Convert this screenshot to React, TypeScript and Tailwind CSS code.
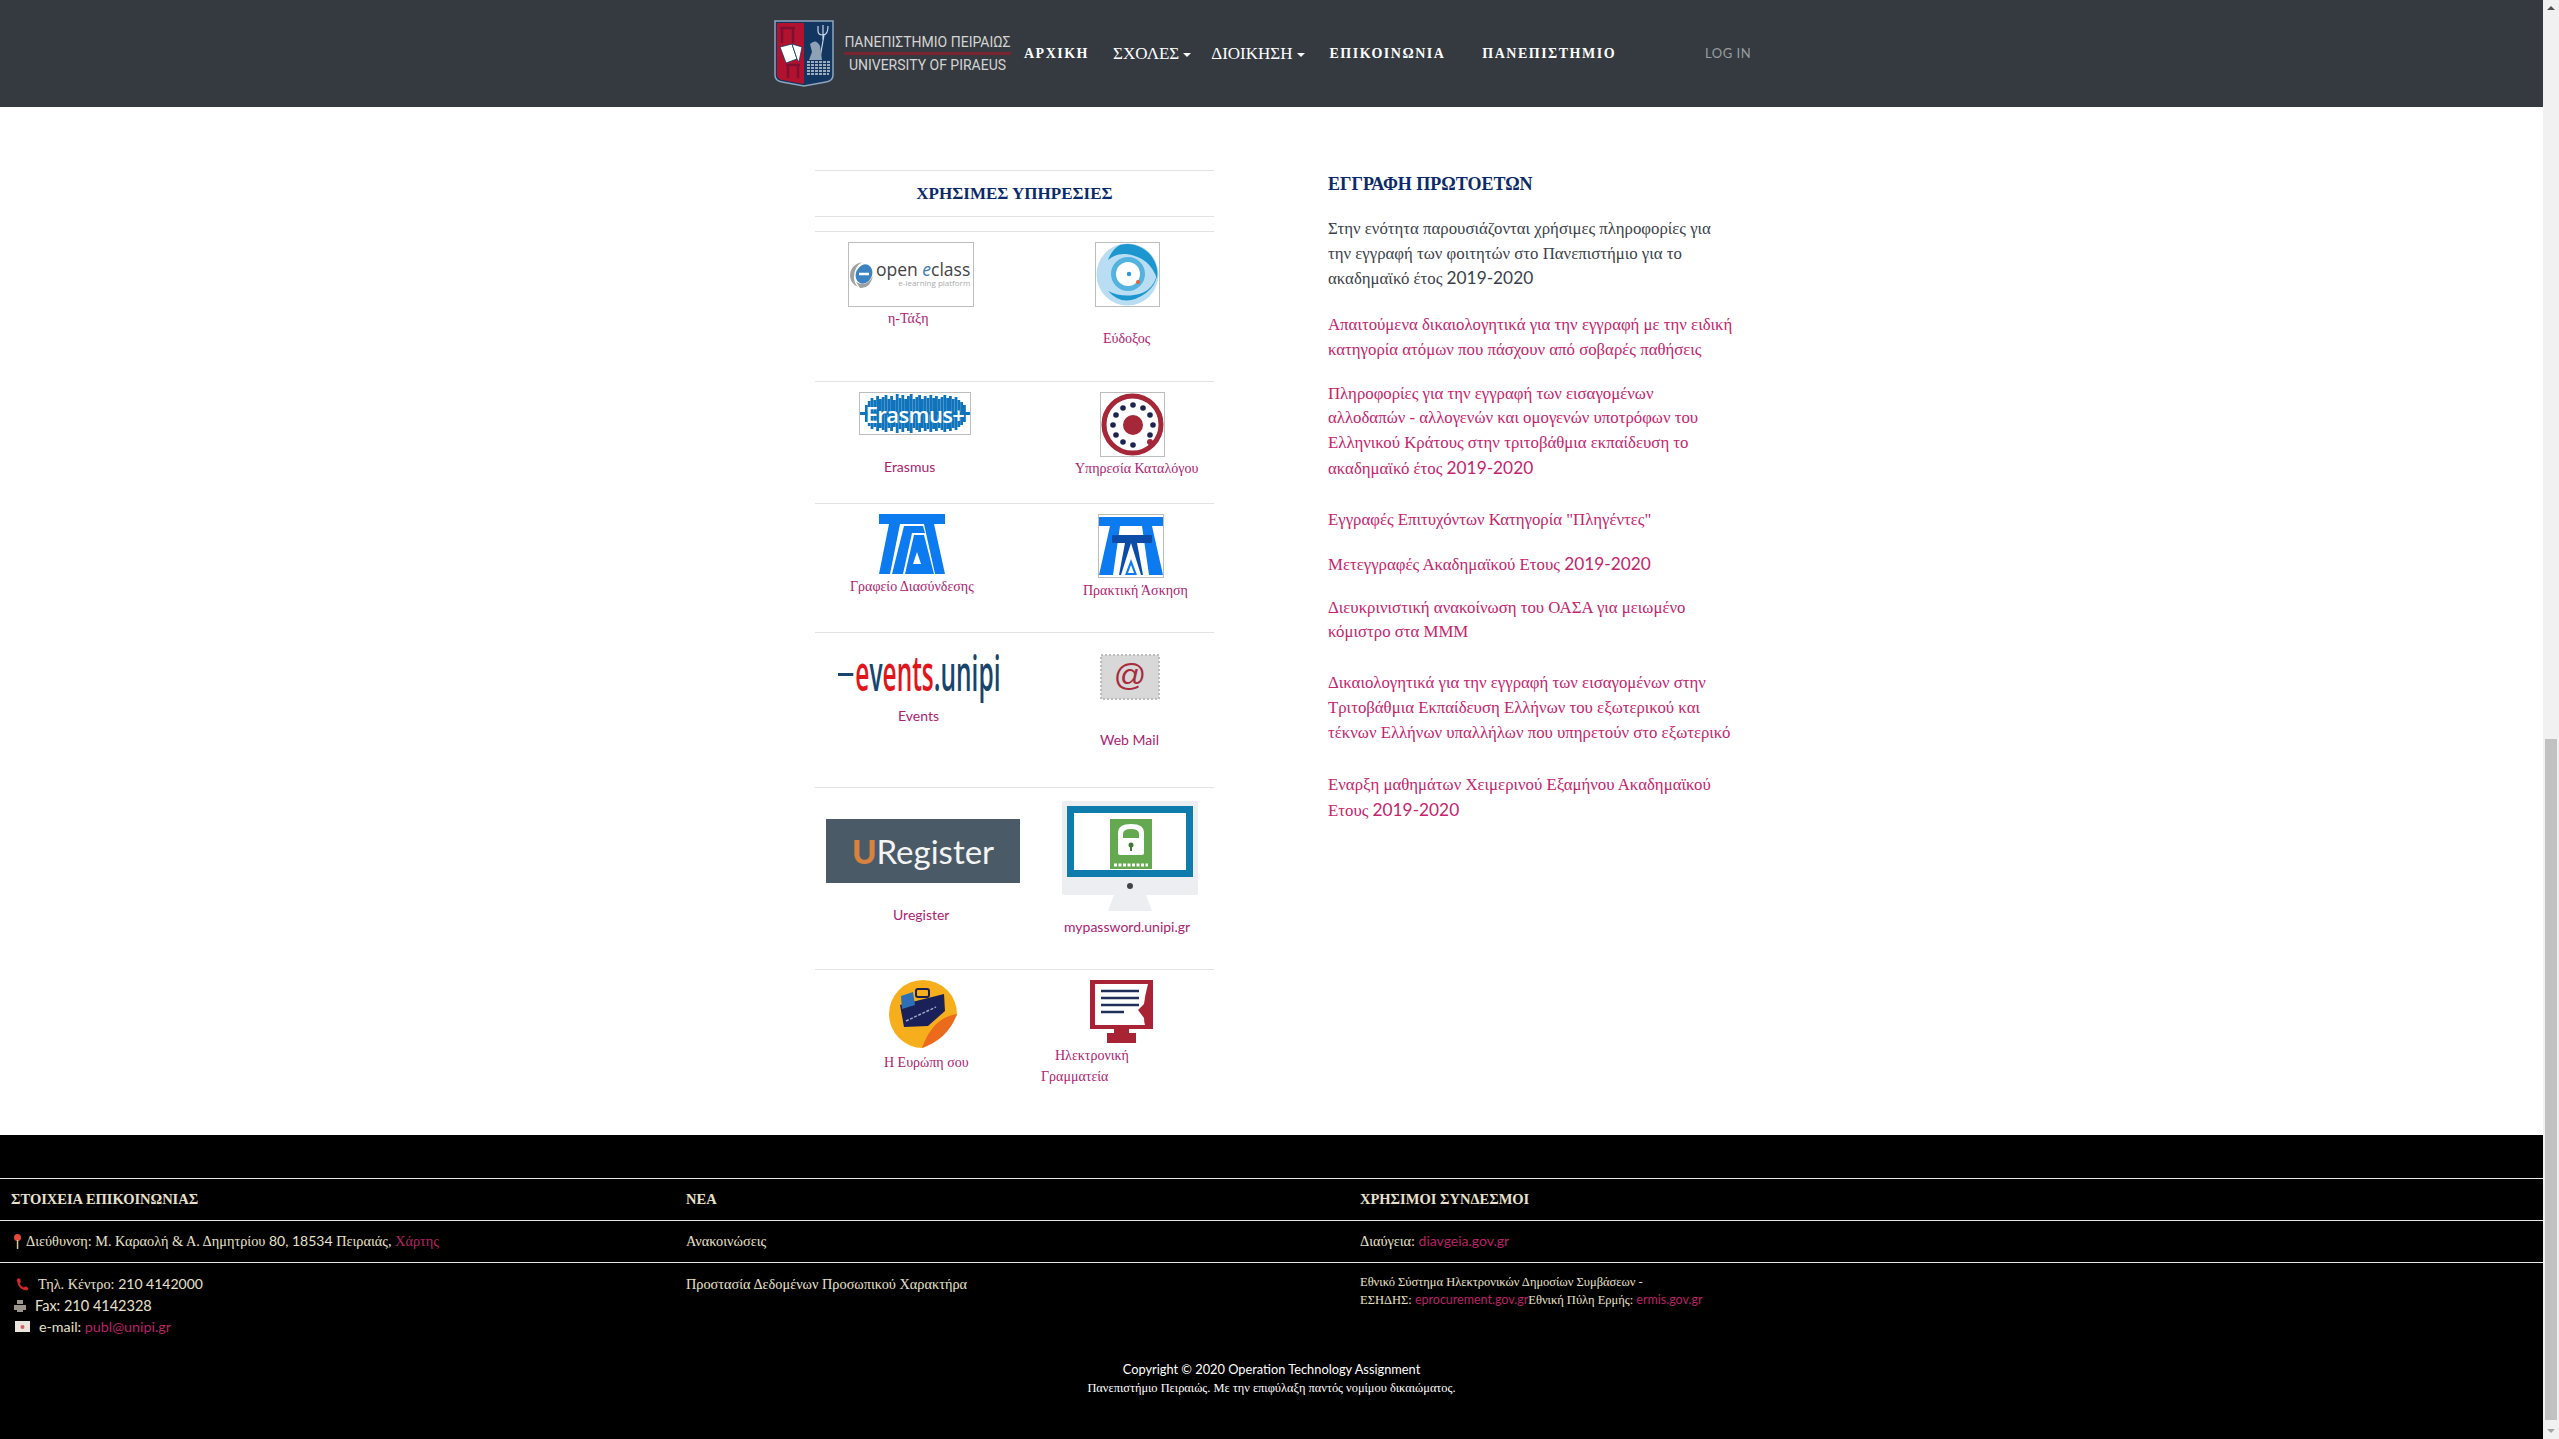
import React from 'react'

const link = 'text-[#b92265]'

// Latin and digits come out in Lato on the real page, greek falls back to a serif
const L = ({ children, className = '' }: { children: React.ReactNode; className?: string }) => (
  <span className={`font-['Lato',sans-serif] ${className}`}>{children}</span>
)

const Shield = () => (
  <svg width="60" height="67" viewBox="0 0 60 67">
    <path d="M1 1H59V55Q59 61 52 62L30 66L8 62Q1 61 1 55Z" fill="#12365f" stroke="#8fa6bd" strokeWidth="1.500" />
    <path d="M3 3H30V64L8 60Q3 59 3 54Z" fill="#b3122f" />
    <path d="M8 7V23M19 7V23M6 8H21M14 44V58M24 44V58M12 45H26" stroke="#7d1030" strokeWidth="2.500" fill="none" />
    <path d="M6 27L18 24L23 39L12 43Z" fill="#fff" stroke="#12365f" strokeWidth="0.800" />
    <path d="M18 24L28 27L25 42L23 39Z" fill="#fff" stroke="#12365f" strokeWidth="0.800" />
    <path d="M49 5V20M44 6V11Q44 15 49 15Q54 15 54 6M50 15L46 38" stroke="#c9d4df" strokeWidth="1.200" fill="none" />
    <path d="M36 24Q42 18 46 26L48 40H35L38 32Z" fill="#8ea2b5" />
    <path d="M33 42H57M33 45H57M33 48H57M33 51H57M33 54H55" stroke="#c9d4df" strokeWidth="1.500" strokeDasharray="3 1" />
  </svg>
)

const EclassLogo = () => (
  <div className="flex h-[65px] w-[126px] items-center border border-[#bdbdbd] bg-white">
    <svg width="26" height="28" viewBox="0 0 26 28" className="shrink-0">
      <path d="M1 15Q1 4 13 1Q5 6 5 16Q5 22 9 26Q1 22 1 15Z" fill="#a0a0a0" />
      <ellipse cx="15" cy="13" rx="8" ry="10" fill="#3c83c2" transform="rotate(25 15 13)" />
      <path d="M10 13H20" stroke="#fff" strokeWidth="2.500" />
      <path d="M7 21Q17 27 24 15Q21 28 11 27Z" fill="#a0a0a0" />
    </svg>
    <div className="ml-px shrink-0 whitespace-nowrap font-['Open_Sans',sans-serif]">
      <div className="text-[17.500px] leading-[17px] text-[#444]">open <span className="italic text-[#3c78b8]">e</span>class</div>
      <div className="text-right text-[8px] leading-[10px] text-[#aaa]">e-learning platform</div>
    </div>
  </div>
)

const EudoxusLogo = () => (
  <div className="h-[65px] w-[65px] border border-[#bdbdbd] bg-white">
    <svg width="63" height="63" viewBox="0 0 63 63">
      <circle cx="31.500" cy="31.500" r="31" fill="#b9def3" />
      <path d="M24 2A30 30 0 0 1 61 36Q54 14 30 11Q20 10 12 17Q16 6 24 2Z" fill="#1c96cf" />
      <path d="M12 48Q28 66 50 50Q60 42 61 32Q56 50 38 52Q24 54 12 48Z" fill="#1c96cf" />
      <circle cx="32" cy="31" r="17" fill="#53b3de" />
      <circle cx="32" cy="31" r="12" fill="#fff" />
      <circle cx="33" cy="31" r="2.200" fill="#2a96d2" />
      <circle cx="42" cy="39" r="2" fill="#e2603d" />
    </svg>
  </div>
)

const skyline = [12, 8, 5, 7, 3, 6, 4, 2, 6, 3, 7, 1, 5, 2, 6, 3, 1, 6, 4, 2, 6, 3, 5, 2, 5, 3, 6, 4, 2, 5, 3, 6, 4, 7, 9, 12]

const ErasmusLogo = () => (
  <div className="relative flex h-[43px] w-[112px] items-center justify-center overflow-hidden border border-[#bdbdbd] bg-white">
    <svg width="110" height="41" viewBox="0 0 110 41" className="absolute left-0 top-0">
      <rect x="0" y="19" width="110" height="3" fill="#0f74bb" />
      {skyline.map((h, i) => (
        <rect key={i} x={5 + i * 2.800} y={h} width="2.800" height={41 - 2 * h} fill="#0f74bb" />
      ))}
    </svg>
    <span className="relative font-['Open_Sans',sans-serif] text-[22px] font-semibold leading-none tracking-[-0.6px] text-white">Erasmus+</span>
  </div>
)

const CatalogLogo = () => (
  <div className="h-[65px] w-[65px] border border-[#bdbdbd] bg-white">
    <svg width="63" height="63" viewBox="0 0 63 63">
      <circle cx="31.500" cy="31.500" r="28.500" fill="none" stroke="#a52738" strokeWidth="5" />
      <circle cx="32" cy="32" r="10" fill="#a52738" />
      {[
        [32, 12], [42, 15], [49, 22], [52, 32], [49, 42], [32, 52], [22, 49], [15, 42], [12, 32], [15, 22], [22, 15],
      ].map(([x, y]) => (
        <circle key={`${x}-${y}`} cx={x} cy={y} r="2.800" fill="#1d2450" />
      ))}
      <circle cx="49" cy="49" r="3" fill="#a52738" />
    </svg>
  </div>
)

const TgdLogo = () => (
  <svg width="66" height="60" viewBox="0 0 66 60" className="block">
    <rect width="66" height="60" fill="#fff" />
    <rect width="66" height="10" fill="#0d7bf0" />
    <path d="M10 10H21L11 60H0Z" fill="#0d7bf0" />
    <path d="M25 12H44L46 19H33L24 60H13Z" fill="#0d7bf0" />
    <path d="M35 21H45L55 60H26Z" fill="#0d7bf0" />
    <path d="M38 38L42 50H34Z" fill="#fff" />
    <path d="M45 10H55L66 60H56Z" fill="#0d7bf0" />
  </svg>
)

const PraktikiLogo = () => (
  <div className="w-fit border border-[#bdbdbd] bg-white">
    <svg width="64" height="62" viewBox="0 0 64 62" className="block">
      <rect y="2" width="64" height="9" fill="#0d7bf0" />
      <path d="M11 11H21L14 60H0ZM43 11H53L64 60H50Z" fill="#0d7bf0" />
      <rect x="13" y="20" width="40" height="8" rx="1" fill="#0a4ca8" />
      <path d="M20 60L26 28H32L22 60ZM44 60L38 28H32L42 60Z" fill="#0a4ca8" />
      <path d="M32 44L38 60H26Z" fill="#0d7bf0" />
      <path d="M32 50L35 58H29Z" fill="#fff" />
    </svg>
  </div>
)

const EventsLogo = () => (
  <div className="h-[45px] w-[160px] overflow-visible">
    <div className="flex w-[300px] origin-left scale-x-[0.51] items-center whitespace-nowrap font-['Open_Sans',sans-serif] text-[48px] font-semibold leading-[45px] text-[#17456c]">
      <span className="mr-1 mt-1 inline-block h-[3px] w-[30px] shrink-0 bg-[#17456c]" />
      <span className="text-[#e2141c]">e</span>v<span className="text-[#e2141c]">ents</span>.unipi
    </div>
  </div>
)

const WebMailLogo = () => (
  <svg width="60" height="46" viewBox="0 0 60 46" className="block">
    <rect x="1" y="1" width="58" height="44" fill="#d8d8d8" stroke="#bcbcbc" strokeWidth="2" strokeDasharray="2 2" />
    <text x="30" y="32" textAnchor="middle" fontSize="32" fontFamily="Liberation Sans" fill="#a92b3e">@</text>
  </svg>
)

const URegisterLogo = () => (
  <div className="flex h-16 w-[194px] items-center justify-center bg-[#4a5b67] font-['Lato',sans-serif] text-[33px] leading-none text-[#f4f4f4]">
    <span className="font-black text-[#d9813f]">U</span>Register
  </div>
)

const MonitorLogo = () => (
  <svg width="136" height="110" viewBox="0 0 136 110" className="block">
    <rect width="136" height="94" rx="2" fill="#edeef2" />
    <path d="M52 94H84L90 110H46Z" fill="#edeef2" />
    <rect x="5" y="5" width="126" height="71" fill="#0f7cae" />
    <rect x="12" y="12" width="112" height="57" fill="#fff" />
    <rect x="48" y="18" width="42" height="50" fill="#64a94f" />
    <path d="M56 38V32Q56 23 69 23Q82 23 82 32V38H77V33Q77 28 69 28Q61 28 61 33V38Z" fill="#fff" />
    <rect x="56" y="37" width="26" height="17" rx="2" fill="#fff" />
    <circle cx="69" cy="44" r="2.500" fill="#43783a" />
    <rect x="68" y="45" width="2" height="5" fill="#43783a" />
    <path d="M52 64H86" stroke="#fff" strokeWidth="3" strokeDasharray="3 1.500" />
    <circle cx="68" cy="85" r="3" fill="#3f4447" />
  </svg>
)

const EuropeLogo = () => (
  <svg width="70" height="70" viewBox="0 0 70 70" className="block">
    <path d="M35 1A34 34 0 0 1 69 36L35 69A34 34 0 0 1 35 1Z" fill="#f6ae1c" />
    <path d="M69 35Q45 38 34 69Q60 60 69 35Z" fill="#ec6a1c" />
    <rect x="28" y="10" width="13" height="8" rx="2" fill="none" stroke="#1c1f4a" strokeWidth="2" />
    <path d="M12 26L56 15L57 32L40 47L16 48Z" fill="#1a2058" />
    <path d="M13 17L25 13L27 26L14 30Z" fill="#2e70b8" />
    <path d="M18 42L48 28" stroke="#9da6c8" strokeWidth="1.500" strokeDasharray="3 1.500" />
  </svg>
)

const SecretariatLogo = () => (
  <svg width="63" height="63" viewBox="0 0 63 63" className="block">
    <rect width="63" height="49" fill="#a82434" />
    <path d="M5 4H58Q55 15 54 24L48 30L54 38Q54 42 55 45H5Z" fill="#fff" />
    <path d="M11 11H49M11 18H49M11 25H49M11 32H34" stroke="#20305a" strokeWidth="2.500" />
    <rect x="24" y="49" width="15" height="5" fill="#a82434" />
    <rect x="17" y="53" width="29" height="10" fill="#a82434" />
  </svg>
)

const Caption = ({ children, className }: { children: React.ReactNode; className: string }) => (
  <div className={`whitespace-nowrap text-[14px] leading-5 text-[#ad2270] ${className}`}>{children}</div>
)

const Caret = () => <span className="ml-1 inline-block border-x-[4px] border-t-[4px] border-x-transparent border-t-white align-middle" />

const ServiceRow = ({ height, left, right }: { height: string; left: React.ReactNode; right: React.ReactNode }) => (
  <div className={`flex border-t border-[#e3e3e3] ${height}`}>
    <div className="w-[199px] shrink-0">{left}</div>
    <div className="flex-1">{right}</div>
  </div>
)

const Y = () => <L className="text-[17.300px]">2019-2020</L>

const paragraphs: { dark?: boolean; mt: string; text: React.ReactNode }[] = [
  { dark: true, mt: 'mt-[21px]', text: <>Στην ενότητα παρουσιάζονται χρήσιμες πληροφορίες για<br />την εγγραφή των φοιτητών στο Πανεπιστήμιο για το<br />ακαδημαϊκό έτος <Y /></> },
  { mt: 'mt-[21px]', text: <>Απαιτούμενα δικαιολογητικά για την εγγραφή με την ειδική<br />κατηγορία ατόμων που πάσχουν από σοβαρές παθήσεις</> },
  { mt: 'mt-[19px]', text: <>Πληροφορίες για την εγγραφή των εισαγομένων<br />αλλοδαπών - αλλογενών και ομογενών υποτρόφων του<br />Ελληνικού Κράτους στην τριτοβάθμια εκπαίδευση το<br />ακαδημαϊκό έτος <Y /></> },
  { mt: 'mt-[27px]', text: <>Εγγραφές Επιτυχόντων Κατηγορία "Πληγέντες"</> },
  { mt: 'mt-[19px]', text: <>Μετεγγραφές Ακαδημαϊκού Ετους <Y /></> },
  { mt: 'mt-[18px]', text: <>Διευκρινιστική ανακοίνωση του ΟΑΣΑ για μειωμένο<br />κόμιστρο στα ΜΜΜ</> },
  { mt: 'mt-[26px]', text: <>Δικαιολογητικά για την εγγραφή των εισαγομένων στην<br />Τριτοβάθμια Εκπαίδευση Ελλήνων του εξωτερικού και<br />τέκνων Ελλήνων υπαλλήλων που υπηρετούν στο εξωτερικό</> },
  { mt: 'mt-[28px]', text: <>Εναρξη μαθημάτων Χειμερινού Εξαμήνου Ακαδημαϊκού<br />Ετους <Y /></> },
]

const App = () => {
  return (
    <div className="flex h-[1439px] w-full overflow-hidden bg-white font-['Liberation_Serif',serif]">
      <div className="flex min-w-0 flex-1 flex-col">
        <header className="flex h-[107px] shrink-0 items-center bg-[#343a40] pl-[774px] text-white">
          <Shield />
          <div className="ml-2.5 w-[167px] shrink-0 whitespace-nowrap text-center font-['Roboto',sans-serif] text-[14px] leading-[16px] text-[#d4d4d4]">
            <div>ΠΑΝΕΠΙΣΤΗΜΙΟ ΠΕΙΡΑΙΩΣ</div>
            <div className="my-[2px] h-[3px] bg-[#7a2430]" />
            <div>UNIVERSITY OF PIRAEUS</div>
          </div>
          <nav className="flex items-center whitespace-nowrap text-[17px]">
            <span className="ml-[13px] text-[14px] font-bold tracking-[1.500px]">ΑΡΧΙΚΗ</span>
            <span className="ml-6">ΣΧΟΛΕΣ<Caret /></span>
            <span className="ml-5">ΔΙΟΙΚΗΣΗ<Caret /></span>
            <span className="ml-[25px] text-[14px] font-bold tracking-[1.500px]">ΕΠΙΚΟΙΝΩΝΙΑ</span>
            <span className="ml-[37px] text-[14px] font-bold tracking-[1.500px]">ΠΑΝΕΠΙΣΤΗΜΙΟ</span>
            <L className="ml-[89px] text-[13px] tracking-[0.5px] text-[#9a9da0]">LOG IN</L>
          </nav>
        </header>

        <main className="flex h-[1028px] shrink-0 pl-[815px] pt-[63px]">
          <section className="w-[399px] shrink-0">
            <div className="flex h-[47px] items-center justify-center border-y border-[#e3e3e3] text-[17px] font-bold text-[#0a2a6b]">
              ΧΡΗΣΙΜΕΣ ΥΠΗΡΕΣΙΕΣ
            </div>
            <div className="mt-[14px]">
              <ServiceRow
                height="h-[150px]"
                left={<div className="ml-[33px] mt-[10px]"><EclassLogo /><Caption className="ml-[40px] mt-0.5">η-Τάξη</Caption></div>}
                right={<div className="ml-[81px] mt-[10px]"><EudoxusLogo /><Caption className="ml-[8px] mt-[22px]">Εύδοξος</Caption></div>}
              />
              <ServiceRow
                height="h-[122px]"
                left={<div className="ml-[44px] mt-[10px]"><ErasmusLogo /><Caption className="ml-[25px] mt-[22px]"><L>Erasmus</L></Caption></div>}
                right={<div className="ml-[86px] mt-[10px]"><CatalogLogo /><Caption className="-ml-[25px] mt-0.5">Υπηρεσία Καταλόγου</Caption></div>}
              />
              <ServiceRow
                height="h-[129px]"
                left={<div className="ml-[64px] mt-[10px]"><TgdLogo /><Caption className="-ml-[29px] mt-[3px]">Γραφείο Διασύνδεσης</Caption></div>}
                right={<div className="ml-[84px] mt-[10px]"><PraktikiLogo /><Caption className="-ml-[15px] mt-[3px]">Πρακτική Άσκηση</Caption></div>}
              />
              <ServiceRow
                height="h-[155px]"
                left={<div className="ml-[23px] mt-[17px]"><EventsLogo /><Caption className="ml-[60px] mt-[11px]"><L>Events</L></Caption></div>}
                right={<div className="ml-[86px] mt-[21px]"><WebMailLogo /><Caption className="ml-0 mt-[30px]"><L>Web Mail</L></Caption></div>}
              />
              <ServiceRow
                height="h-[182px]"
                left={<div className="ml-[11px] mt-[31px]"><URegisterLogo /><Caption className="ml-[67px] mt-[22px]"><L>Uregister</L></Caption></div>}
                right={<div className="ml-[48px] mt-[13px]"><MonitorLogo /><Caption className="ml-[2px] mt-[6px]"><L>mypassword.unipi.gr</L></Caption></div>}
              />
              <ServiceRow
                height="h-[165px]"
                left={<div className="ml-[73px] mt-[9px]"><EuropeLogo /><Caption className="-ml-[4px] mt-[4px]">Η Ευρώπη σου</Caption></div>}
                right={
                  <div className="ml-[76px] mt-[10px]">
                    <SecretariatLogo />
                    <Caption className="-ml-[35px] mt-[3px]">Ηλεκτρονική</Caption>
                    <Caption className="-ml-[49px] mt-px">Γραμματεία</Caption>
                  </div>
                }
              />
            </div>
          </section>

          <section className="ml-[114px] whitespace-nowrap pt-[2px] text-[16.800px] leading-[24.700px]">
            <h2 className="text-[18px] font-bold leading-6 text-[#0a2a6b]">ΕΓΓΡΑΦΗ ΠΡΩΤΟΕΤΩΝ</h2>
            {paragraphs.map((p, i) => (
              <p key={i} className={`${p.mt} ${p.dark ? 'text-[#3a3f4a]' : 'text-[#c4246c]'}`}>{p.text}</p>
            ))}
          </section>
        </main>

        <footer className="min-h-0 flex-1 bg-black pt-[43px] text-[14.300px] text-[#e8e0cc]">
          <div className="grid h-[43px] grid-cols-[675px_674px_1fr] items-center border-y border-[#e6e6e6] text-[14.500px] font-bold [&>div]:pl-[11px]">
            <div>ΣΤΟΙΧΕΙΑ ΕΠΙΚΟΙΝΩΝΙΑΣ</div>
            <div>ΝΕΑ</div>
            <div>ΧΡΗΣΙΜΟΙ ΣΥΝΔΕΣΜΟΙ</div>
          </div>
          <div className="grid h-[42px] grid-cols-[675px_674px_1fr] items-center border-b border-[#e6e6e6] [&>div]:pl-[11px]">
            <div className="flex items-center">
              <svg width="7" height="15" viewBox="0 0 7 15" className="ml-[3px] mr-[5px]">
                <circle cx="3.500" cy="3.500" r="3.500" fill="#e5483a" />
                <rect x="2.800" y="6" width="1.500" height="9" fill="#d8c8a8" />
              </svg>
              <span>Διεύθυνση: Μ. Καραολή &amp; Α. Δημητρίου <L className="text-[14px]">80, 18534</L> Πειραιάς, <span className={link}>Χάρτης</span></span>
            </div>
            <div>Ανακοινώσεις</div>
            <div>Διαύγεια: <L className={`text-[14px] ${link}`}>diavgeia.gov.gr</L></div>
          </div>
          <div className="grid grid-cols-[675px_674px_1fr] [&>div]:pl-[11px]">
            <div className="pt-[10px] leading-[21px]">
              <div className="flex items-center">
                <svg width="14" height="14" viewBox="0 0 24 24" className="ml-1 mr-[9px]"><path d="M5 2L9 3L10 9L8 11Q10 16 15 18L18 16L23 19L21 23Q6 23 3 5Z" fill="#d8252a" /></svg>
                <span>Τηλ. Κέντρο: <L className="text-[14px]">210 4142000</L></span>
              </div>
              <div className="flex items-center">
                <svg width="12" height="12" viewBox="0 0 12 12" className="ml-[3px] mr-[9px]"><path d="M3 0H9V4H3ZM0 5H12V10H0ZM3 8H9V12H3Z" fill="#9c9488" /></svg>
                <L className="text-[14.500px]">Fax: 210 4142328</L>
              </div>
              <div className="flex items-center">
                <svg width="15" height="11" viewBox="0 0 15 11" className="ml-1 mr-[9px]"><rect width="15" height="11" fill="#ece5dc" /><circle cx="7.500" cy="6" r="2" fill="#d0606a" /></svg>
                <L className="text-[14.300px]">e-mail: <span className={link}>publ@unipi.gr</span></L>
              </div>
            </div>
            <div className="pt-[11px] leading-[21px]">Προστασία Δεδομένων Προσωπικού Χαρακτήρα</div>
            <div className="whitespace-nowrap pt-[11px] text-[12.500px] leading-[17px]">
              Εθνικό Σύστημα Ηλεκτρονικών Δημοσίων Συμβάσεων -<br />
              ΕΣΗΔΗΣ: <L className={`text-[12.500px] ${link}`}>eprocurement.gov.gr</L>Εθνική Πύλη Ερμής: <L className={`text-[12.500px] ${link}`}>ermis.gov.gr</L>
            </div>
          </div>
          <div className="mt-[23px] text-center text-white">
            <L className="block text-[12.800px] leading-[19px]">Copyright © 2020 Operation Technology Assignment</L>
            <div className="text-[12.400px] leading-[19px]">Πανεπιστήμιο Πειραιώς. Με την επιφύλαξη παντός νομίμου δικαιώματος.</div>
          </div>
        </footer>
      </div>

      <aside className="relative h-full w-4 shrink-0 bg-[#f1f1f1]">
        <span className="absolute left-1 top-[6px] border-x-4 border-b-4 border-x-transparent border-b-[#505050]" />
        <div className="absolute inset-x-0.5 bottom-[19px] top-[739px] bg-[#c1c1c1]" />
        <span className="absolute bottom-[6px] left-1 border-x-4 border-t-4 border-x-transparent border-t-[#a3a3a3]" />
      </aside>
    </div>
  )
}

export default App
